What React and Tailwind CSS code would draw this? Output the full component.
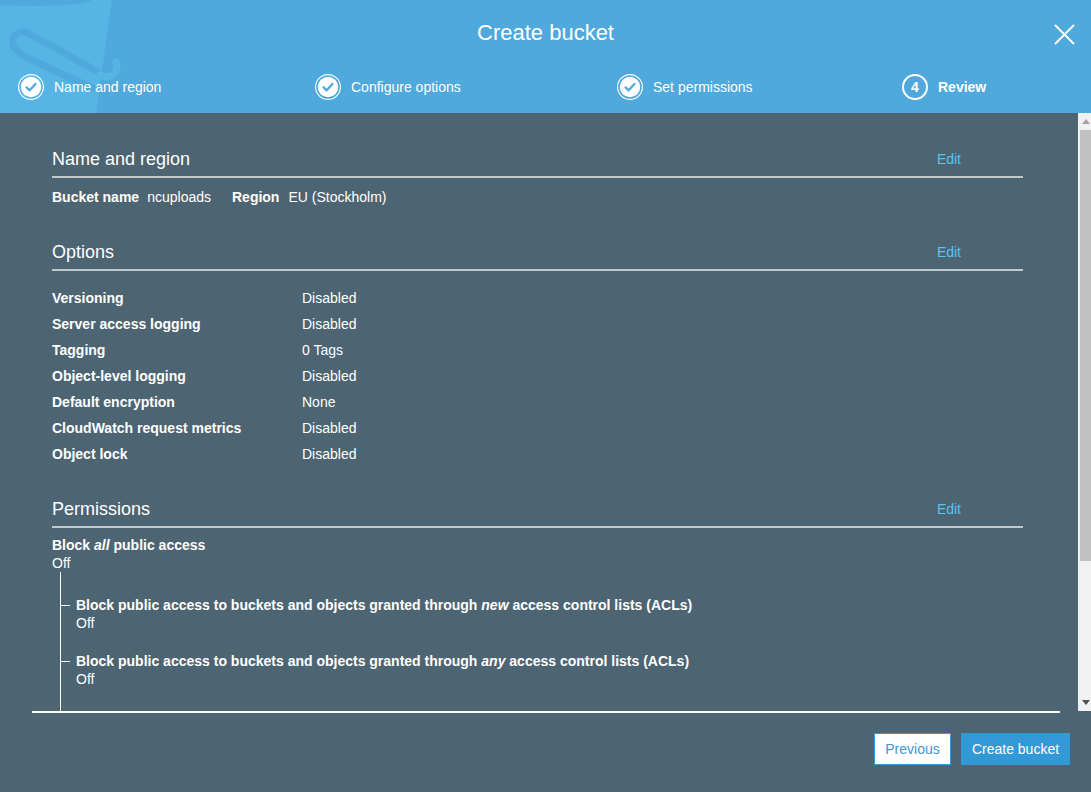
import React from "react";

const font = { fontFamily: '"Liberation Sans", Arial, sans-serif' };

function CheckStep() {
  return (
    <svg width="26" height="26" viewBox="0 0 26 26" className="shrink-0">
      <circle cx="13" cy="13" r="12.4" fill="none" stroke="#ffffff" strokeWidth="1.1" />
      <circle cx="13" cy="13" r="10.2" fill="#ffffff" />
      <path d="M8.6 13.4 L11.7 16.3 L17.4 9.9" fill="none" stroke="#4fa9dc" strokeWidth="2.3" strokeLinecap="round" strokeLinejoin="round" />
    </svg>
  );
}

function NumStep({ n }) {
  return (
    <div className="w-[26px] h-[26px] shrink-0 rounded-full border-2 border-white flex items-center justify-center text-[14px] font-bold text-white leading-none">
      {n}
    </div>
  );
}

function Bucket() {
  return (
    <svg width="130" height="113" viewBox="0 0 130 113" className="shrink-0">
      <path d="M0 0 L112 0 L96 113 L0 113 Z" fill="#57b4e5" />
      <path d="M0 0 L92 0 C80 6 40 7 0 5 Z" fill="#4fa9dc" />
      <path d="M100 73 L30 34 C18 28 9 38 14 47 C17 52 22 55 30 59 L92 88" fill="none" stroke="#4fa9dc" strokeWidth="7" strokeLinecap="round" strokeLinejoin="round" />
      <path d="M100 75 C110 80 120 73 116 62" fill="none" stroke="#57b4e5" strokeWidth="7" strokeLinecap="round" />
    </svg>
  );
}

function SectionHeader({ title }) {
  return (
    <div className="flex items-end justify-between border-b-2 border-[#c3c8cb] pb-[5px] w-[971px]">
      <div className="text-[18px] leading-[24px] text-white">{title}</div>
      <div className="text-[14px] leading-[24px] text-[#5cc3ee] pr-[62px]">Edit</div>
    </div>
  );
}

const options = [
  ["Versioning", "Disabled"],
  ["Server access logging", "Disabled"],
  ["Tagging", "0 Tags"],
  ["Object-level logging", "Disabled"],
  ["Default encryption", "None"],
  ["CloudWatch request metrics", "Disabled"],
  ["Object lock", "Disabled"],
];

function SubItem({ pre, em, post }) {
  return (
    <div className="flex flex-col">
      <div className="flex items-center h-[18px]">
        <div className="w-[9px] h-px bg-white shrink-0" />
        <div className="pl-[6px] text-[14px] leading-[18px] font-bold text-white whitespace-nowrap">
          {pre}
          <em>{em}</em>
          {post}
        </div>
      </div>
      <div className="pl-[15px] text-[14px] leading-[18px] text-white">Off</div>
    </div>
  );
}

export default function App() {
  return (
    <div className="w-[1091px] h-[792px] overflow-hidden bg-[#4d6472] flex flex-col" style={font}>
      {/* Header */}
      <div className="h-[113px] bg-[#4fa9dc] relative shrink-0 overflow-hidden">
        <div className="absolute left-0 top-0">
          <Bucket />
        </div>
        <div className="relative flex flex-col">
          <div className="h-[66px] flex items-center justify-center">
            <div className="text-[22px] leading-[26px] text-white">Create bucket</div>
          </div>
          <div className="h-[42px] flex items-center pl-[18px] text-[14px] text-white">
            <div className="w-[297px] flex items-center gap-[10px]">
              <CheckStep />
              <span>Name and region</span>
            </div>
            <div className="w-[302px] flex items-center gap-[10px]">
              <CheckStep />
              <span>Configure options</span>
            </div>
            <div className="w-[285px] flex items-center gap-[10px]">
              <CheckStep />
              <span>Set permissions</span>
            </div>
            <div className="flex items-center gap-[10px]">
              <NumStep n="4" />
              <span className="font-bold">Review</span>
            </div>
          </div>
        </div>
        <button className="absolute right-[16px] top-[24px] w-[21px] h-[21px]">
          <svg width="21" height="21" viewBox="0 0 21 21">
            <path d="M1 1 L20 20 M20 1 L1 20" stroke="#ffffff" strokeWidth="1.8" />
          </svg>
        </button>
      </div>

      {/* Body with scrollbar */}
      <div className="h-[598px] flex shrink-0">
        <div className="flex-1 overflow-hidden pl-[52px] pt-[34px] text-white">
          <SectionHeader title="Name and region" />
          <div className="mt-[9px] flex items-center text-[14px] leading-[20px]">
            <span className="font-bold">Bucket name</span>
            <span className="ml-[8px]">ncuploads</span>
            <span className="font-bold ml-[21px]">Region</span>
            <span className="ml-[9px]">EU (Stockholm)</span>
          </div>

          <div className="mt-[33px]">
            <SectionHeader title="Options" />
          </div>
          <div className="mt-[14px] flex flex-col">
            {options.map(([k, v]) => (
              <div key={k} className="flex h-[26px] items-center text-[14px]">
                <div className="w-[250px] font-bold">{k}</div>
                <div>{v}</div>
              </div>
            ))}
          </div>

          <div className="mt-[30px]">
            <SectionHeader title="Permissions" />
          </div>
          <div className="mt-[8px] text-[14px] leading-[18px]">
            <div className="font-bold">
              Block <em>all</em> public access
            </div>
            <div>Off</div>
          </div>
          <div className="ml-[8px] border-l border-white pt-[24px] pb-[40px] flex flex-col gap-[20px]">
            <SubItem pre="Block public access to buckets and objects granted through " em="new" post=" access control lists (ACLs)" />
            <SubItem pre="Block public access to buckets and objects granted through " em="any" post=" access control lists (ACLs)" />
          </div>
        </div>
        {/* Scrollbar */}
        <div className="w-[13px] bg-[#f1f1f1] flex flex-col items-end shrink-0">
          <div className="h-[17px] w-full flex items-center justify-center pl-[2px]">
            <svg width="8" height="5" viewBox="0 0 8 5">
              <path d="M0 5 L4 0 L8 5 Z" fill="#a3a3a3" />
            </svg>
          </div>
          <div className="w-[11px] h-[431px] bg-[#c1c1c1]" />
          <div className="flex-1" />
          <div className="h-[17px] w-full flex items-center justify-center pl-[2px]">
            <svg width="8" height="5" viewBox="0 0 8 5">
              <path d="M0 0 L8 0 L4 5 Z" fill="#505050" />
            </svg>
          </div>
        </div>
      </div>

      {/* Footer */}
      <div className="flex flex-col">
        <div className="ml-[32px] w-[1028px] h-[2px] bg-white" />
        <div className="mt-[20px] flex justify-end gap-[10px] pr-[21px]">
          <button className="h-[32px] w-[77px] bg-white border border-[#3a99d8] text-[14px] text-[#3e96d6]">
            Previous
          </button>
          <button className="h-[32px] w-[109px] bg-[#3399d6] text-[14px] text-white">
            Create bucket
          </button>
        </div>
      </div>
    </div>
  );
}
